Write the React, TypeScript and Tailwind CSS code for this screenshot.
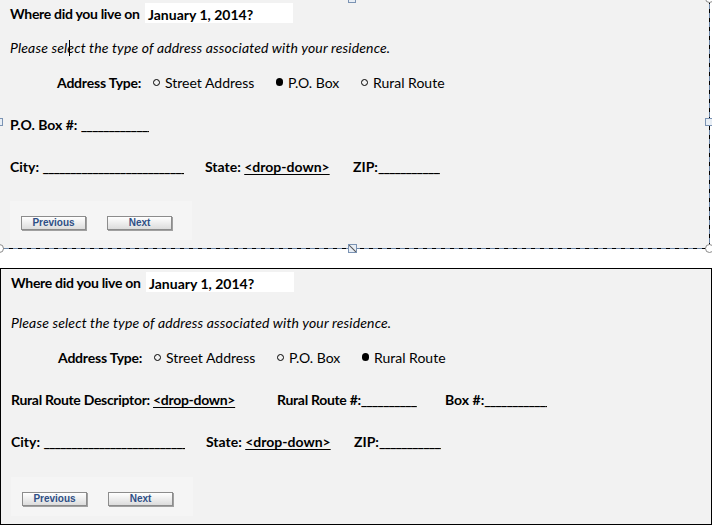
import React from "react";

const font = { fontFamily: "Lato, 'Open Sans', sans-serif" };

function Radio({ on }: { on?: boolean }) {
  return on ? (
    <span className="inline-block w-[7px] h-[8px] rounded-full bg-black mr-[5px]" />
  ) : (
    <span className="inline-block w-[7px] h-[7px] rounded-full border border-black mr-[5px]" />
  );
}

function Blank({ w }: { w: number }) {
  return (
    <span
      className="inline-block overflow-hidden whitespace-nowrap align-top tracking-[-1px] h-[20px] leading-[20px]"
      style={{ width: w }}
    >
      ____________________________________________
    </span>
  );
}

function Btn({ label }: { label: string }) {
  return (
    <div className="w-[65px] h-[14px] border border-[#8c8c8c] bg-[linear-gradient(#ffffff,#dcdcdc)] shadow-[1px_1px_0_#a0a0a0] flex items-center justify-center text-[10px] leading-none text-[#2e4f86] font-bold" style={{ fontFamily: "'Liberation Sans', Arial, sans-serif" }}>
      {label}
    </div>
  );
}

function Heading() {
  return (
    <div className="flex items-center h-[20px] pl-[10px] whitespace-nowrap">
      <span className="font-bold text-[14px] w-[135px] tracking-[-0.3px]">Where did you live on</span>
      <span className="bg-white h-[20px] w-[148px] flex items-center pl-[3px] pt-[2px] font-bold text-[14px]">
        January 1, 2014?
      </span>
    </div>
  );
}

function AddressType({ sel }: { sel: number }) {
  return (
    <div className="flex items-center h-[20px] pl-[57px] text-[14px] whitespace-nowrap">
      <span className="font-bold w-[96px] tracking-[-0.2px]">Address Type:</span>
      <span className="w-[123px] flex items-center"><Radio on={sel === 0} />Street Address</span>
      <span className="w-[85px] flex items-center"><Radio on={sel === 1} />P.O. Box</span>
      <span className="flex items-center"><Radio on={sel === 2} />Rural Route</span>
    </div>
  );
}

function CityRow() {
  return (
    <div className="flex items-center h-[20px] pl-[10px] text-[14px] font-bold leading-[20px]">
      <span className="w-[195px] whitespace-nowrap">City: <Blank w={142} /></span>
      <span className="w-[148px] whitespace-nowrap">State: <span className="underline underline-offset-2">&lt;drop-down&gt;</span></span>
      <span className="whitespace-nowrap">ZIP:<Blank w={62} /></span>
    </div>
  );
}

function Buttons() {
  return (
    <div className="ml-[10px] w-[182px] h-[39px] bg-[#f5f5f5] flex items-start gap-[21px] pl-[11px] pt-[15px]">
      <Btn label="Previous" />
      <Btn label="Next" />
    </div>
  );
}

const Italic = () => (
  <div className="flex items-center h-[20px] pl-[10px] text-[14px] italic tracking-[0.15px] whitespace-nowrap">
    Please select the type of address associated with your residence.
  </div>
);

function Handle({ cls, sq }: { cls: string; sq?: boolean }) {
  return sq ? (
    <span className={"absolute w-[8px] h-[8px] border border-[#7b93b3] bg-[#e8eef5] " + cls} />
  ) : (
    <span className={"absolute w-[9px] h-[9px] rounded-full border border-[#8a8a8a] bg-white " + cls} />
  );
}

export default function App() {
  return (
    <div className="relative w-[712px] h-[525px] bg-white text-black overflow-hidden" style={font}>
      {/* top panel */}
      <div className="relative w-[710px] h-[249px] bg-[#f2f2f2] flex flex-col pt-[3px]">
        <Heading />
        <div className="mt-[14px]"><Italic /></div>
        <div className="mt-[15px]"><AddressType sel={1} /></div>
        <div className="mt-[23px] flex items-center h-[20px] pl-[10px] text-[14px] font-bold whitespace-nowrap leading-[20px]">
          P.O. Box #:&nbsp;<Blank w={68} />
        </div>
        <div className="mt-[22px]"><CityRow /></div>
        <div className="mt-[24px]"><Buttons /></div>
        {/* dashed right & bottom */}
        <div className="absolute right-0 top-0 w-px h-full bg-[repeating-linear-gradient(180deg,#000_0_4px,#6d87a8_4px_9px)]" />
        <div className="absolute left-0 bottom-0 w-full h-px bg-[repeating-linear-gradient(90deg,#000_0_4px,#6d87a8_4px_9px)]" />
        <span className="absolute left-[69px] top-[40px] w-px h-[16px] bg-black" />
        <Handle sq cls="left-[348px] top-[-5px]" />
        <Handle cls="left-[705px] top-[-6px]" />
        <Handle sq cls="left-[-5px] top-[118px]" />
        <Handle sq cls="left-[705px] top-[118px]" />
        <Handle cls="left-[-5px] top-[244px]" />
        <Handle cls="left-[705px] top-[244px]" />
        <span className="absolute left-[348px] top-[244px] w-[9px] h-[9px] border border-[#7b93b3] bg-[#e8eef5] overflow-hidden">
          <span className="absolute left-[-2px] top-[3px] w-[11px] h-px bg-[#555] rotate-45" />
        </span>
      </div>

      {/* bottom panel */}
      <div className="mt-[19px] w-[712px] h-[257px] border border-black bg-[#f2f2f2] flex flex-col pt-[3px]">
        <Heading />
        <div className="mt-[20px]"><Italic /></div>
        <div className="mt-[15px]"><AddressType sel={2} /></div>
        <div className="mt-[23px] flex items-center h-[20px] pl-[10px] text-[14px] font-bold whitespace-nowrap leading-[20px]">
          <span className="w-[266px] tracking-[-0.3px]">Rural Route Descriptor: <span className="underline underline-offset-2">&lt;drop-down&gt;</span></span>
          <span className="w-[168px] tracking-[-0.3px]">Rural Route #:<Blank w={56} /></span>
          <span>Box #:<Blank w={63} /></span>
        </div>
        <div className="mt-[22px]"><CityRow /></div>
        <div className="mt-[25px]"><Buttons /></div>
      </div>
    </div>
  );
}
